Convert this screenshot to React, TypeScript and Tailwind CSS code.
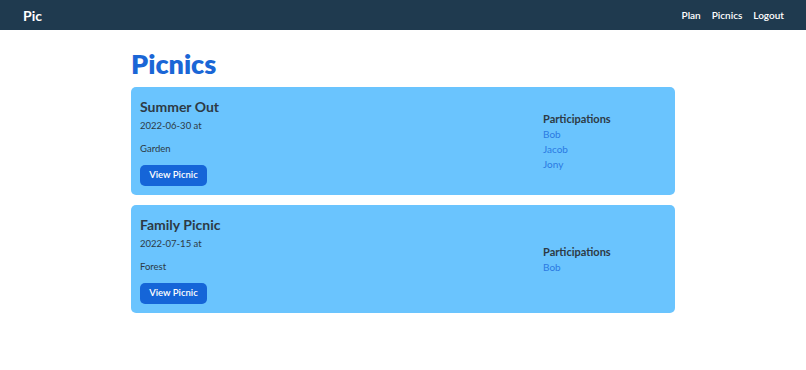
const picnics = [
  { id: 1, name: 'Summer Out', date: '2022-06-30', place: 'Garden', people: ['Bob', 'Jacob', 'Jony'] },
  { id: 2, name: 'Family Picnic', date: '2022-07-15', place: 'Forest', people: ['Bob'] },
];

function Navbar() {
  return (
    <nav className="flex h-[30px] items-center justify-between bg-[#1f3a4f] pl-[23px] pr-[22px] text-white">
      <a href="#" className="text-[14px] font-bold">Pic</a>
      <div className="flex gap-[11px] text-[10px] font-semibold">
        <a href="#">Plan</a>
        <a href="#">Picnics</a>
        <a href="#">Logout</a>
      </div>
    </nav>
  );
}

export default function App() {
  return (
    <div className="min-h-[370px] bg-white font-['Lato',sans-serif] text-[#2d3a45]">
      <Navbar />
      <main className="mx-auto w-[544px] pt-[17px]">
        <h1 className="text-[27px] font-extrabold leading-[34px] text-[#1a66d6]">Picnics</h1>
        <div className="mt-[6px] flex flex-col gap-[10px]">
          {picnics.map((p) => (
            <div key={p.id} className="flex h-[108px] items-center justify-between rounded-[5px] bg-[#6ac4fe] pl-[9px]">
              <div className="flex flex-col">
                <h2 className="text-[14px] font-bold leading-[20px]">{p.name}</h2>
                <p className="mt-[2px] text-[9.5px] leading-[14px]">{p.date} at</p>
                <p className="mt-[9px] text-[9.5px] leading-[14px]">{p.place}</p>
                <button
                  type="button"
                  className="mt-[9px] h-[21px] w-[67px] rounded-[5px] bg-[#1565d8] text-[9.5px] font-semibold text-white"
                >
                  View Picnic
                </button>
              </div>
              <div className="flex w-[132px] flex-col">
                <h3 className="text-[11px] font-bold leading-[16px]">Participations</h3>
                {p.people.map((name) => (
                  <a key={name} href="#" className="text-[10px] leading-[15px] text-[#2a7ae2]">{name}</a>
                ))}
              </div>
            </div>
          ))}
        </div>
      </main>
    </div>
  );
}
